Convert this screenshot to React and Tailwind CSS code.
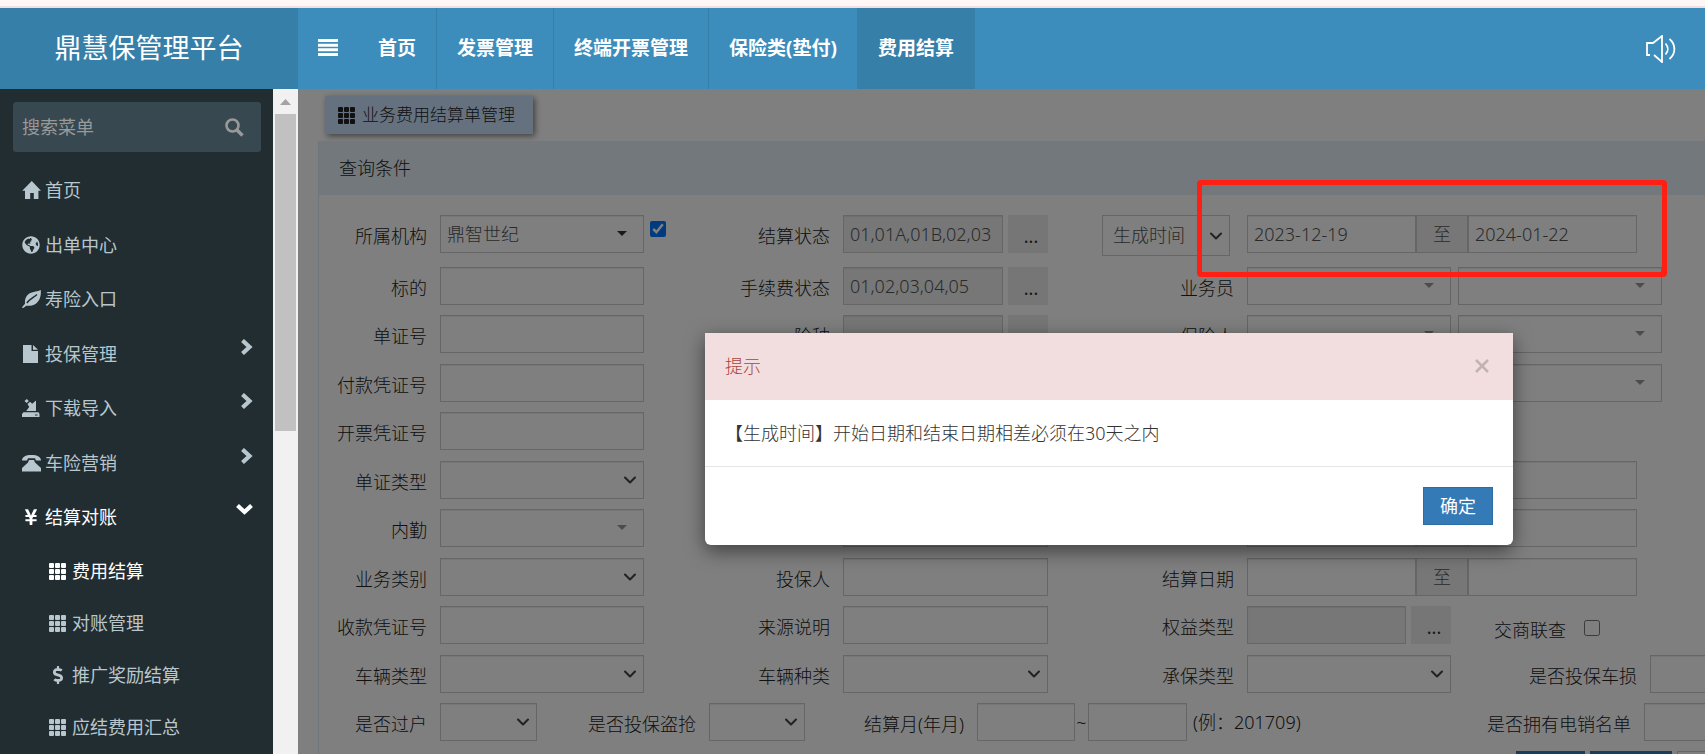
import React from 'react'
import { ChevronDown } from 'lucide-react'
import { FaDollarSign, FaGlobeAmericas, FaYenSign } from 'react-icons/fa'

const Svg = ({ children, className = 'h-[18px] w-[19px]', viewBox = '0 0 19 18' }) => (
    <svg viewBox={viewBox} className={`shrink-0 ${className}`} fill="currentColor" aria-hidden="true">
        {children}
    </svg>
)

const HomeIcon = () => (
    <Svg>
        <path d="M9.8 0 19 9.8h-2.6V18h-4.6v-6H8.2v6H3V9.8H.2z" />
    </Svg>
)

const LeafIcon = () => (
    <Svg>
        <path d="M18.8 0c.4 5.600-.8 11-5.800 14.200-3 1.900-6.200 1.700-8.700 1.500L1 18.200 0 17.300l3-3.500C2.600 9.500 4 5.300 8.300 3.100 11.500 1.500 15.500 1.600 18.800 0z" />
        <path d="M4.800 13C8 8.800 11 8 15 4.500" fill="none" stroke="#222d32" strokeWidth="1.500" />
    </Svg>
)

const FileIcon = () => (
    <Svg>
        <path d="M1 0h8.500v6H16v12H1z" />
        <path d="M11 0l5 4.800h-5z" />
    </Svg>
)

const SaveIcon = () => (
    <Svg>
        <path d="M2.500 2 4.800 0l2 2-2.200 2z" />
        <path d="M5.500 5 8 2.800l2.200 2L14 1.500V12H4.200l3-4z" />
        <path d="M1.500 13.200h15L17.500 15v3H0v-3z" />
        <path d="M13 15.500h2.500v1H13z" fill="#222d32" />
    </Svg>
)

const PhoneIcon = () => (
    <Svg>
        <path d="M0 6.500C0 3 3.500 1 9.500 1S19 3 19 6.500H14L13 4.300H6L5 6.500z" />
        <path d="M7 6h5l1 2.500 6 5.500v3.500H0V14l6-5.500z" />
    </Svg>
)

const GridIcon = () => (
    <Svg className="h-[17px] w-[18px]" viewBox="0 0 18 17">
        {[0, 6, 12].map((y) =>
            [0, 6, 12].map((x) => <rect key={`${x}-${y}`} x={x} y={y} width="5" height="5" rx="1" />)
        )}
    </Svg>
)

const SearchIcon = () => (
    <Svg className="size-[19px]" viewBox="0 0 19 19">
        <circle cx="7.500" cy="7.500" r="6" fill="none" stroke="currentColor" strokeWidth="2.600" />
        <path d="M12 12l5.500 5.500" stroke="currentColor" strokeWidth="3.400" />
    </Svg>
)

const SpeakerIcon = () => (
    <svg viewBox="0 0 31 28" className="h-7 w-[31px]" fill="none" stroke="white" strokeWidth="1.800" aria-hidden="true">
        <path d="M4 20H1V8h6l9-7v26l-8-7" />
        <path d="M19.500 8.500c3 3.300 3 7.700 0 11M23.500 4c6.500 5.500 6.500 14.500 0 20" />
    </svg>
)

const navItems = ['首页', '发票管理', '终端开票管理', '保险类(垫付)', '费用结算']

const menuItems = [
    { label: '首页', icon: <HomeIcon /> },
    { label: '出单中心', icon: <FaGlobeAmericas size={18} /> },
    { label: '寿险入口', icon: <LeafIcon /> },
    { label: '投保管理', icon: <FileIcon />, arrow: true },
    { label: '下载导入', icon: <SaveIcon />, arrow: true },
    { label: '车险营销', icon: <PhoneIcon />, arrow: true },
    { label: '结算对账', icon: <FaYenSign size={18} />, open: true },
]

const subItems = [
    { label: '费用结算', icon: <GridIcon />, active: true },
    { label: '对账管理', icon: <GridIcon /> },
    { label: '推广奖励结算', icon: <FaDollarSign size={18} /> },
    { label: '应结费用汇总', icon: <GridIcon /> },
]

const fieldBox = 'h-[38px] w-full min-w-0 border border-[#ccc] px-1.5 text-[18px] text-[#555] shadow-[inset_0_1px_1px_rgba(0,0,0,0.075)]'

function Input({ name, value, disabled }) {
    return (
        <input
            id={name}
            aria-label={name}
            type="text"
            defaultValue={value}
            disabled={disabled}
            className={`${fieldBox} ${disabled ? 'bg-[#eee]' : 'bg-white'}`}
        />
    )
}

function Select({ name, value, combo, dark }) {
    return (
        <div className="relative w-full min-w-0">
            <select id={name} aria-label={name} className={`${fieldBox} block appearance-none bg-white ${dark ? 'text-[#333]' : ''}`}>
                <option>{value}</option>
            </select>
            {combo ? (
                <svg
                    viewBox="0 0 10 5"
                    className={`pointer-events-none absolute top-4 right-[17px] h-[5px] w-2.5 ${dark ? 'text-[#333]' : 'text-[#999]'}`}
                    fill="currentColor"
                >
                    <path d="M0 0h10L5 5z" />
                </svg>
            ) : (
                <ChevronDown size={20} strokeWidth={2.500} className="pointer-events-none absolute top-[9px] right-1 text-[#444]" />
            )}
        </div>
    )
}

function Picker({ name, value }) {
    return (
        <div className="flex w-full gap-[5px]">
            <Input name={name} value={value} disabled />
            <button type="button" className="h-[38px] w-10 shrink-0 bg-[#ececec] pt-1 pl-1.5 font-normal text-[#333]">
                ...
            </button>
        </div>
    )
}

function DateRange({ name, from, to }) {
    return (
        <div className="mr-[68px] flex flex-1">
            <Input name={name} value={from} />
            <span className="flex h-[38px] w-[52px] shrink-0 items-center justify-center border border-[#ccc] bg-[#eee] text-[#555]">
                至
            </span>
            <Input name={name && `${name}止`} value={to} />
        </div>
    )
}

function Pair({ name }) {
    return (
        <div className="mr-[43px] flex flex-1 gap-[7px]">
            <Select name={name} combo />
            <Select name={name && `${name}名称`} combo />
        </div>
    )
}

const Label = ({ text, className = 'w-[108px]' }) => (
    <label htmlFor={text} className={`mr-[13px] shrink-0 pt-[9px] text-right leading-[25px] whitespace-nowrap ${className}`}>
        {text}
    </label>
)

function Field({ label, children, after }) {
    return (
        <div className="flex min-w-0">
            <Label text={label} />
            <div className="min-w-0 flex-1">{children}</div>
            <div className="w-[78px] shrink-0 pt-1.5 pl-1.5">{after}</div>
        </div>
    )
}

function WideField({ label, children }) {
    return (
        <div className="flex min-w-0">
            <Label text={label} />
            {children}
        </div>
    )
}

function Row({ children }) {
    return <div className="grid h-[38px] grid-cols-[403fr_404fr_579fr] odd:mb-2.5 even:mb-[11px]">{children}</div>
}

function Header() {
    return (
        <header className="flex h-[81px] shrink-0 bg-[#3c8dbc] text-white">
            <a href="#" className="flex w-[298px] shrink-0 items-center justify-center bg-[#367fa9] text-[27px]">
                鼎慧保管理平台
            </a>
            <button type="button" aria-label="切换菜单" className="flex w-[60px] justify-end pt-[31px] pr-5">
                <svg viewBox="0 0 20 17" className="h-[17px] w-5" fill="white">
                    <path d="M0 0h20v3H0zM0 4.700h20v3H0zM0 9.300h20v3H0zM0 14h20v3H0z" />
                </svg>
            </button>
            <nav className="flex text-[19px] font-bold">
                {navItems.map((item, i) => (
                    <a
                        key={item}
                        href="#"
                        className={`flex items-center border-r border-[#367fa9] px-5 ${i === 4 ? 'bg-[#367fa9]' : ''}`}
                    >
                        {item}
                    </a>
                ))}
            </nav>
            <button type="button" aria-label="声音" className="mr-7 ml-auto">
                <SpeakerIcon />
            </button>
        </header>
    )
}

function Sidebar() {
    return (
        <aside className="flex w-[298px] shrink-0 overflow-hidden bg-[#222d32] text-[18px] text-[#b8c7ce]">
            <div className="min-w-0 flex-1 pt-[13px]">
                <form className="mr-3 ml-[13px] flex h-[50px] items-center rounded-[3px] bg-[#374850] pr-[17px] pl-[9px] text-[#999]">
                    <input
                        type="text"
                        aria-label="搜索菜单"
                        placeholder="搜索菜单"
                        className="min-w-0 flex-1 bg-transparent placeholder:text-[#999]"
                    />
                    <button type="button" aria-label="搜索">
                        <SearchIcon />
                    </button>
                </form>
                <ul className="mt-[11px]">
                    {menuItems.map((item) => (
                        <li key={item.label} className="odd:mb-px">
                            <a href="#" className={`flex h-[54px] items-center pr-5 pl-[22px] ${item.open ? 'text-white' : ''}`}>
                                <span className="flex w-[23px]">{item.icon}</span>
                                <span>{item.label}</span>
                                {item.arrow && (
                                    <Svg className="mb-3.5 ml-auto h-4 w-[13px]" viewBox="0 0 13 16">
                                        <path d="M2.500 1.500 9.500 8l-7 6.500" fill="none" stroke="currentColor" strokeWidth="4.200" />
                                    </Svg>
                                )}
                                {item.open && (
                                    <Svg className="mb-4 ml-auto h-3 w-[17px]" viewBox="0 0 17 12">
                                        <path d="M1.500 2.500l7 6.500 7-6.500" fill="none" stroke="currentColor" strokeWidth="4.200" />
                                    </Svg>
                                )}
                            </a>
                        </li>
                    ))}
                </ul>
                <ul>
                    {subItems.map((item) => (
                        <li key={item.label}>
                            <a
                                href="#"
                                className={`flex h-[52px] items-center pl-[49px] ${item.active ? 'text-white' : ''}`}
                            >
                                <span className="mr-[5px] flex w-[18px] justify-center">{item.icon}</span>
                                <span>{item.label}</span>
                            </a>
                        </li>
                    ))}
                </ul>
            </div>
            {/* Scrollbar */}
            <div className="w-[25px] shrink-0 bg-[#f1f1f1] px-0.5">
                <div className="flex h-[25px] items-center justify-center">
                    <svg viewBox="0 0 11 6" className="h-1.5 w-[11px]" fill="#a3a3a3">
                        <path d="M0 6 5.500 0 11 6z" />
                    </svg>
                </div>
                <div className="h-[317px] bg-[#c1c1c1]" />
            </div>
        </aside>
    )
}

function QueryForm() {
    return (
        <section className="mt-[7px] ml-5 border-l border-[#d9edf7]">
            <h2 className="flex h-[54px] items-center bg-[#e4f0f7] pl-5">查询条件</h2>
            <form className="pt-5">
                <div className="mb-3.5 grid h-[38px] grid-cols-[403fr_404fr_579fr]">
                    <Field
                        label="所属机构"
                        after={<input type="checkbox" aria-label="包含下级" defaultChecked className="block size-4" />}
                    >
                        <Select name="所属机构" value="鼎智世纪" combo dark />
                    </Field>
                    <Field label="结算状态">
                        <Picker name="结算状态" value="01,01A,01B,02,03" />
                    </Field>
                    <div className="flex min-w-0">
                        <div className="relative mr-[17px] -ml-6 w-32 shrink-0">
                            <select
                                aria-label="时间类型"
                                className="block h-[41px] w-full appearance-none border border-[#ccc] bg-white px-2.5 text-[#555]"
                            >
                                <option>生成时间</option>
                            </select>
                            <ChevronDown size={20} strokeWidth={2.500} className="pointer-events-none absolute top-[11px] right-1 text-[#444]" />
                        </div>
                        <DateRange name="生成时间" from="2023-12-19" to="2024-01-22" />
                    </div>
                </div>
                <div>
                    <Row>
                        <Field label="标的"><Input name="标的" /></Field>
                        <Field label="手续费状态"><Picker name="手续费状态" value="01,02,03,04,05" /></Field>
                        <WideField label="业务员"><Pair name="业务员" /></WideField>
                    </Row>
                    <Row>
                        <Field label="单证号"><Input name="单证号" /></Field>
                        <Field label="险种"><Picker name="险种" /></Field>
                        <WideField label="保险人"><Pair name="保险人" /></WideField>
                    </Row>
                    <Row>
                        <Field label="付款凭证号"><Input name="付款凭证号" /></Field>
                        <Field><Input /></Field>
                        <WideField><Pair /></WideField>
                    </Row>
                    <Row>
                        <Field label="开票凭证号"><Input name="开票凭证号" /></Field>
                        <Field><Input /></Field>
                    </Row>
                    <Row>
                        <Field label="单证类型"><Select name="单证类型" /></Field>
                        <Field><Input /></Field>
                        <WideField><DateRange /></WideField>
                    </Row>
                    <Row>
                        <Field label="内勤"><Select name="内勤" combo /></Field>
                        <Field><Input /></Field>
                        <WideField><DateRange /></WideField>
                    </Row>
                    <Row>
                        <Field label="业务类别"><Select name="业务类别" /></Field>
                        <Field label="投保人"><Input name="投保人" /></Field>
                        <WideField label="结算日期"><DateRange name="结算日期" /></WideField>
                    </Row>
                    <Row>
                        <Field label="收款凭证号"><Input name="收款凭证号" /></Field>
                        <Field label="来源说明"><Input name="来源说明" /></Field>
                        <WideField label="权益类型">
                            <div className="flex-1"><Picker name="权益类型" /></div>
                            <div className="flex w-[254px] shrink-0 pl-[43px]">
                                <label htmlFor="union" className="pt-3 leading-[25px]">交商联查</label>
                                <input id="union" type="checkbox" className="mt-3.5 ml-[18px] size-4" />
                            </div>
                        </WideField>
                    </Row>
                    <Row>
                        <Field label="车辆类型"><Select name="车辆类型" /></Field>
                        <Field label="车辆种类"><Select name="车辆种类" /></Field>
                        <WideField label="承保类型">
                            <div className="flex-1"><Select name="承保类型" /></div>
                            <Label text="是否投保车损" className="w-[186px]" />
                            <div className="-mr-[150px] w-[205px] shrink-0"><Select name="是否投保车损" /></div>
                        </WideField>
                    </Row>
                    <div className="mb-2.5 flex h-[38px]">
                        <Label text="是否过户" />
                        <div className="w-[97px] shrink-0"><Select name="是否过户" /></div>
                        <Label text="是否投保盗抢" className="w-[159px]" />
                        <div className="w-24 shrink-0"><Select name="是否投保盗抢" /></div>
                        <Label text="结算月(年月)" className="w-[159px]" />
                        <div className="w-[98px] shrink-0"><Input name="结算月(年月)" /></div>
                        <span className="w-[13px] shrink-0 pt-1.5 text-center">~</span>
                        <div className="w-[99px] shrink-0"><Input name="结算月止" /></div>
                        <span className="ml-1.5 shrink-0 pt-1.5">(例：201709)</span>
                        <Label text="是否拥有电销名单" className="ml-auto" />
                        <div className="-mr-10 w-[101px] shrink-0"><Input name="是否拥有电销名单" /></div>
                    </div>
                    <div className="flex justify-end gap-[5px]">
                        <button type="button" aria-label="查询" className="h-[38px] w-[69px] bg-[#337ab7]" />
                        <button type="button" aria-label="导出" className="h-[38px] w-[82px] bg-[#337ab7]" />
                        <button type="button" aria-label="重置" className="-mr-10 h-[38px] w-[68px] border border-[#ccc] bg-white" />
                    </div>
                </div>
            </form>
        </section>
    )
}

function AlertDialog() {
    return (
        <div
            role="alertdialog"
            aria-label="提示"
            className="absolute top-[244px] right-48 left-[407px] overflow-hidden rounded-b-md bg-white text-[#333] shadow-[0_6px_19px_rgba(0,0,0,0.5)]"
        >
            <div className="flex h-[67px] items-center justify-between border-b border-[#e5e5e5] bg-[#f2dede] px-5">
                <h4 className="text-[#a94442]">提示</h4>
                <button type="button" aria-label="关闭" className="mr-1">
                    <svg viewBox="0 0 14 14" className="size-3.5" stroke="#c2b2b2" strokeWidth="2.500">
                        <path d="M1 1l12 12M13 1 1 13" />
                    </svg>
                </button>
            </div>
            <p className="flex h-[66px] items-center px-5">【生成时间】开始日期和结束日期相差必须在30天之内</p>
            <div className="flex h-[79px] items-center justify-end border-t border-[#e5e5e5] px-5">
                <button type="button" className="h-[38px] w-[70px] border border-[#2e6da4] bg-[#337ab7] font-normal text-white">
                    确定
                </button>
            </div>
        </div>
    )
}

export default function App() {
    return (
        <div className="flex h-screen flex-col overflow-hidden bg-white font-['Noto_Sans','Noto_Sans_CJK_SC',sans-serif]">
            <div className="h-2 shrink-0 border-b-2 border-[#f3dfe0] bg-[#fff6f5]" />
            <Header />
            <div className="flex min-h-0 flex-1">
                <Sidebar />
                <main className="relative min-w-0 flex-1 overflow-hidden text-[18px] font-light text-[#222]">
                    <h1 className="mt-[7px] ml-[27px] flex h-[38px] w-fit items-center gap-1.5 bg-[#cae2ff] pr-[18px] pl-[13px] text-[17px] shadow-[2px_2px_6px_rgba(0,0,0,0.5)]">
                        <GridIcon />
                        业务费用结算单管理
                    </h1>
                    <QueryForm />
                    <div className="absolute inset-0 bg-black/50" />
                    <div className="absolute top-[91px] right-[38px] h-[97px] w-[470px] rounded-[4px] border-[5px] border-[#ff2013]" />
                    <AlertDialog />
                </main>
            </div>
        </div>
    )
}
